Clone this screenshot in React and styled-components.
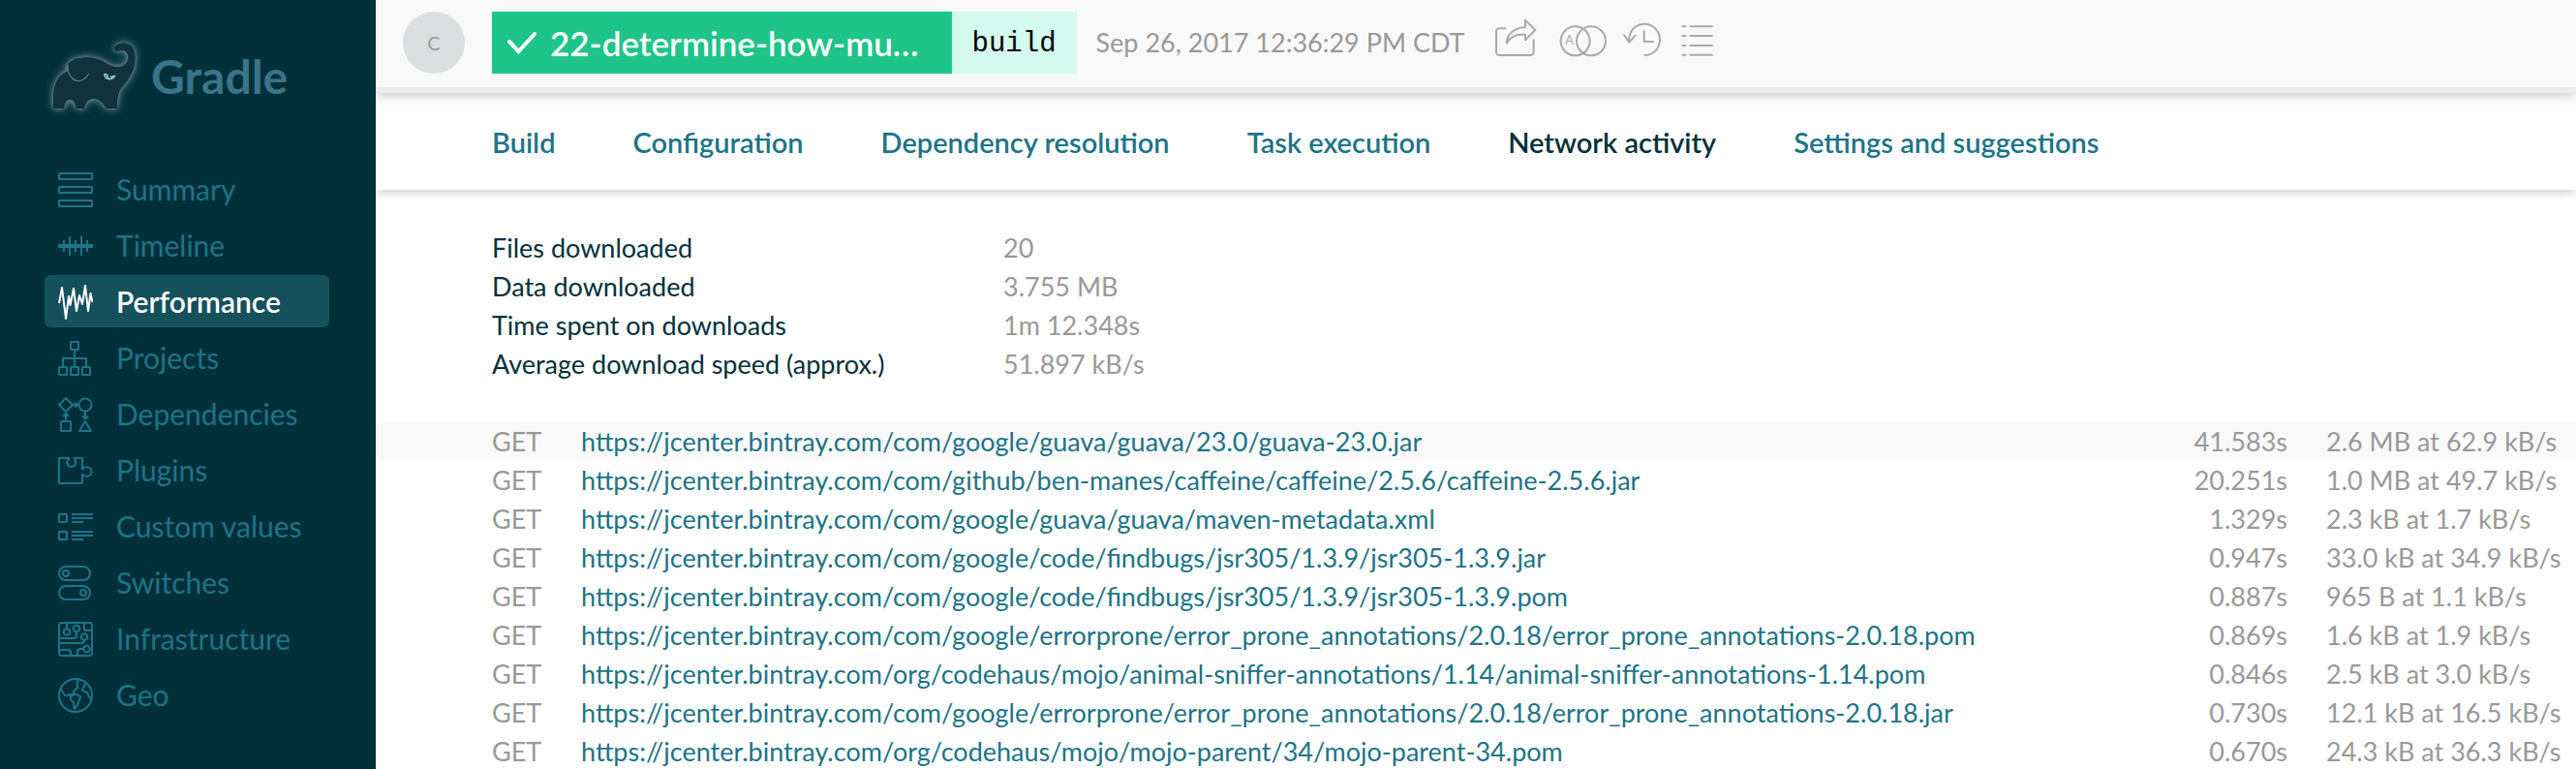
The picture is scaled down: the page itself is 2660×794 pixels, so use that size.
import React from "react";
import styled, { createGlobalStyle, css } from "styled-components";

const GlobalStyle = createGlobalStyle`
  *, *::before, *::after { box-sizing: border-box; }
  body {
    margin: 0;
    background: #fff;
    color: #02303a;
    font-family: Lato, "Liberation Sans", sans-serif;
    font-size: 27px;
    line-height: 40px;
  }
`;

const Shell = styled.div`
  display: flex;
  height: 100vh;
  overflow: hidden;
`;

const Sidebar = styled.aside`
  flex: 0 0 388px;
  padding: 30px 48px 0 46px;
  background: #02303a;
`;

const Brand = styled.a`
  display: flex;
  align-items: center;
  height: 100px;
  color: #3a7488;
  font-size: 48px;
  font-weight: 700;
  line-height: 58px;
  text-decoration: none;
`;

const BrandName = styled.span`
  padding: 0 0 2px 2px;
`;

const BrandMark = styled.svg`
  width: 108px;
  height: 100px;
  overflow: visible;
  filter: drop-shadow(0 0 2px rgba(150, 180, 184, 0.6)) drop-shadow(0 0 4px rgba(150, 180, 184, 0.6));
`;

const NavList = styled.ul`
  display: flex;
  flex-direction: column;
  gap: 4px;
  margin: 38px 0 0;
  padding: 0;
  list-style: none;
`;

const NavLink = styled.a`
  display: flex;
  align-items: center;
  gap: 24px;
  height: 54px;
  padding: 2px 14px 0;
  border-radius: 6px;
  color: #1d7487;
  font-size: 30px;
  line-height: 36px;
  text-decoration: none;
  ${(p) =>
    p.$active &&
    css`
      background: #15505d;
      color: #fff;
      font-weight: 600;
    `}
`;

const NavLabel = styled.span`
  padding-bottom: 2px;
`;

const NavIcon = styled.svg`
  flex: none;
  width: 36px;
  height: 36px;
  fill: none;
  stroke: currentColor;
  stroke-width: 2;
  stroke-linejoin: round;
`;

const Main = styled.main`
  flex: 1;
  min-width: 0;
  overflow: hidden;
`;

const Header = styled.header`
  position: relative;
  z-index: 2;
  display: flex;
  align-items: center;
  height: 96px;
  padding: 0 28px 2px;
  background: #f9f9f9;
  border-bottom: 6px solid #ececec;
  box-shadow: 0 2px 12px rgba(0, 0, 0, 0.24);
`;

const Avatar = styled.div`
  display: flex;
  align-items: center;
  justify-content: center;
  width: 64px;
  height: 64px;
  margin-right: 28px;
  border-radius: 50%;
  background: #dadedf;
  color: #999;
  font-size: 20px;
`;

const BuildName = styled.h1`
  display: flex;
  align-items: center;
  gap: 14px;
  height: 64px;
  margin: 0;
  padding: 0 34px 0 16px;
  background: #1fc48a;
  color: #fff;
  font-size: 35px;
  font-weight: 600;
  white-space: nowrap;
`;

const CheckMark = styled.svg`
  width: 30px;
  height: 24px;
  fill: none;
  stroke: currentColor;
  stroke-width: 4;
  stroke-linecap: round;
`;

const TaskName = styled.code`
  height: 64px;
  padding: 4px 21px 0;
  background: #d4f9ee;
  color: #000;
  font-family: "Liberation Mono", monospace;
  font-size: 29px;
  line-height: 60px;
`;

const Timestamp = styled.time`
  margin: 0 30px 0 20px;
  color: #999;
  white-space: nowrap;
`;

const Actions = styled.div`
  display: flex;
  gap: 12px;
`;

const ActionButton = styled.button`
  display: block;
  padding: 0;
  border: 0;
  background: none;
  color: #aaa;
  cursor: pointer;
`;

const ActionIcon = styled.svg`
  display: block;
  height: 52px;
  fill: none;
  stroke: currentColor;
  stroke-width: 6;
  stroke-linecap: round;
  stroke-linejoin: round;

  text {
    fill: currentColor;
    stroke: none;
    font-family: Lato, sans-serif;
    font-size: 38px;
  }
`;

const Tabs = styled.nav`
  position: relative;
  z-index: 1;
  display: flex;
  align-items: center;
  gap: 80px;
  height: 100px;
  padding: 2px 120px 0;
  background: #fff;
  box-shadow: 0 2px 10px rgba(0, 0, 0, 0.22);
`;

const Tab = styled.a`
  color: ${(p) => (p.$active ? "#02303a" : "#1d7487")};
  font-size: 29px;
  font-weight: 600;
  text-decoration: none;
  white-space: nowrap;
`;

const Stats = styled.dl`
  display: grid;
  grid-template-columns: 528px 1fr;
  margin: 0;
  padding: 40px 120px;

  dd {
    margin: 0;
    color: #999;
  }
`;

const Requests = styled.table`
  width: 100%;
  border-collapse: collapse;
  table-layout: fixed;
`;

const RequestRow = styled.tr`
  background: ${(p) => (p.$highlighted ? "#f9f9f9" : "transparent")};
`;

const Cell = styled.td`
  width: ${(p) => p.$width || "auto"};
  padding: 0 0 0 ${(p) => p.$indent || "0"};
  color: #999;
  text-align: ${(p) => p.$align || "left"};
  white-space: nowrap;
`;

const RequestLink = styled.a`
  color: #1d7487;
  text-decoration: none;
`;

const navItems = [
  {
    label: "Summary",
    icon: (
      <>
        <rect x="1" y="1" width="34" height="6" rx="0.5" />
        <rect x="1" y="15" width="34" height="6" rx="0.5" />
        <rect x="1" y="29" width="34" height="6" rx="0.5" />
      </>
    ),
  },
  {
    label: "Timeline",
    icon: (
      <>
        <path d="M0 18H36" strokeWidth="4" />
        <path d="M6 12V24M12 8V28M18 12V24M24 8V28M30 12V24" />
      </>
    ),
  },
  {
    label: "Performance",
    active: true,
    icon: <path d="M1 19L4 3L8 35L11 12L12.500 21L16 4L19 27L22 11L25 20L28 1L31 27L33.500 9L35.500 18" />,
  },
  {
    label: "Projects",
    icon: (
      <>
        <rect x="13" y="1" width="8" height="8" rx="0.5" />
        <path d="M17 9V27M5 27V18H29V27" />
        <rect x="1" y="27" width="8" height="8" rx="0.5" />
        <rect x="13" y="27" width="8" height="8" rx="0.5" />
        <rect x="25" y="27" width="8" height="8" rx="0.5" />
      </>
    ),
  },
  {
    label: "Dependencies",
    icon: (
      <>
        <path d="M8 1L15 8L8 15L1 8Z" />
        <circle cx="28" cy="8" r="6.500" />
        <rect x="3" y="25" width="10" height="10" rx="0.5" />
        <path d="M28 25L34 35H22Z" />
        <path d="M15 8H20M17.500 5.500L20 8L17.500 10.500M8 25V16.500M5 20L8 17L11 20M28 15V22.500M25 19.500L28 22.500L31 19.500" />
      </>
    ),
  },
  {
    label: "Plugins",
    icon: <path d="M1 5H11V6.500C7.500 9 9.500 14 13.800 14S19.500 9 17 6.500V5H25V16.500C28 12.500 34.500 14 34.500 19S28 25.500 25 21.500V31H1Z" />,
  },
  {
    label: "Custom values",
    icon: (
      <>
        <rect x="1" y="5" width="8" height="8" rx="0.5" />
        <rect x="1" y="23" width="8" height="8" rx="0.5" />
        <path d="M14 5H36M14 9H36M14 13H26M14 23H36M14 27H36M14 31H26" />
      </>
    ),
  },
  {
    label: "Switches",
    icon: (
      <>
        <rect x="1" y="1" width="32" height="14" rx="7" />
        <circle cx="8" cy="8" r="3" />
        <rect x="1" y="21" width="32" height="14" rx="7" />
        <circle cx="26" cy="28" r="3" />
      </>
    ),
  },
  {
    label: "Infrastructure",
    icon: (
      <>
        <rect x="1" y="1" width="34" height="34" rx="3" />
        <circle cx="9" cy="10.500" r="3.300" />
        <circle cx="19" cy="7" r="3.300" />
        <circle cx="27" cy="15.500" r="3.300" />
        <circle cx="29.500" cy="28" r="3.300" />
        <path d="M9 1V7M19 10.500V14Q19 17 16 17H1M27 19Q27 22 24 22H1M27 1V7Q27 9 29 9H35M1 29H10Q13 29 13 32V35M26 28H23Q20 28 20 31V35" />
      </>
    ),
  },
  {
    label: "Geo",
    icon: (
      <>
        <circle cx="18" cy="18" r="17" />
        <path d="M3 11C4 14 5 15 7 18C9 19 10 16.500 16 17V14C17 11 18 13 20 10C19 7 21 5 20 1" />
        <path d="M13 19L18 16.500C20 18 21 19 23 19C23 23 20 25 20 28L17 32C16 30 16.500 27 16 25C13 23 12 22 13 19Z" />
        <path d="M28.500 4.500C28 8 26 9 25 12C27 15 28 14 30 15C31 18 32 20 34 21" />
      </>
    ),
  },
];

const actions = [
  {
    label: "Share",
    x: 33,
    width: 48,
    drawing: (
      <path d="M68 58H50Q39 58 39 69V130Q39 141 50 141H144Q155 141 155 130V94M71 103C72 75 95 57 129 54V32L160 63L129 94V77C105 75 85 82 71 103Z" />
    ),
  },
  {
    label: "Compare",
    x: 213,
    width: 60,
    drawing: (
      <>
        <circle cx="284" cy="97" r="45" />
        <circle cx="333" cy="97" r="45" />
        <text x="253" y="109">A</text>
      </>
    ),
  },
  {
    label: "History",
    x: 429,
    width: 42,
    drawing: <path d="M451 98C448 68 470 44 498 44C526 44 546 67 546 93C546 120 526 141 499 141M435 78L451 101L470 80M497 67V99H525" />,
  },
  {
    label: "Build scans list",
    x: 591,
    width: 42,
    drawing: (
      <path d="M616 52H626M640 52H708M616 81H626M640 81H708M616 111H626M640 111H708M616 140H626M640 140H708" />
    ),
  },
];

const tabs = ["Build", "Configuration", "Dependency resolution", "Task execution", "Network activity", "Settings and suggestions"];

const stats = [
  ["Files downloaded", "20"],
  ["Data downloaded", "3.755 MB"],
  ["Time spent on downloads", "1m 12.348s"],
  ["Average download speed (approx.)", "51.897 kB/s"],
];

const repository = "https://jcenter.bintray.com/";

const requests = [
  ["com/google/guava/guava/23.0/guava-23.0.jar", "41.583s", "2.6 MB at 62.9 kB/s"],
  ["com/github/ben-manes/caffeine/caffeine/2.5.6/caffeine-2.5.6.jar", "20.251s", "1.0 MB at 49.7 kB/s"],
  ["com/google/guava/guava/maven-metadata.xml", "1.329s", "2.3 kB at 1.7 kB/s"],
  ["com/google/code/findbugs/jsr305/1.3.9/jsr305-1.3.9.jar", "0.947s", "33.0 kB at 34.9 kB/s"],
  ["com/google/code/findbugs/jsr305/1.3.9/jsr305-1.3.9.pom", "0.887s", "965 B at 1.1 kB/s"],
  ["com/google/errorprone/error_prone_annotations/2.0.18/error_prone_annotations-2.0.18.pom", "0.869s", "1.6 kB at 1.9 kB/s"],
  ["org/codehaus/mojo/animal-sniffer-annotations/1.14/animal-sniffer-annotations-1.14.pom", "0.846s", "2.5 kB at 3.0 kB/s"],
  ["com/google/errorprone/error_prone_annotations/2.0.18/error_prone_annotations-2.0.18.jar", "0.730s", "12.1 kB at 16.5 kB/s"],
  ["org/codehaus/mojo/mojo-parent/34/mojo-parent-34.pom", "0.670s", "24.3 kB at 36.3 kB/s"],
];

function Elephant() {
  return (
    <BrandMark viewBox="18 0 324 300" aria-hidden="true">
      <path
        fill="#11323b"
        d="M45 246V207C46 170 61 141 90 130L90 111C95 99 110 91 128 89C160 85 186 90 208 104C226 115 240 120 253 116C271 111 280 94 276 80C272 66 258 64 248 68C238 71 229 61 236 53C246 43 262 40 275 45C292 51 300 70 299 93C298 124 284 150 265 172C249 190 241 208 244 246H210C198 228 186 215 168 216C154 216 144 230 141 246H116C113 228 106 219 97 219C87 220 80 230 78 246Z"
      />
      <path fill="none" stroke="#587a80" strokeWidth="4" d="M90 111V130C97 147 106 162 123 161C139 160 148 151 155 138" />
      <path
        fill="none"
        stroke="#8cc0c9"
        strokeWidth="5"
        d="M203 138C204 150 210 155 219 155C227 155 232 152 235 146L222 148M204 139L213 143C211 148 214 152 219 153"
      />
    </BrandMark>
  );
}

export default function App() {
  return (
    <>
      <GlobalStyle />
      <Shell>
        <Sidebar>
          <Brand href="#">
            <Elephant />
            <BrandName>Gradle</BrandName>
          </Brand>
          <nav aria-label="Build scan sections">
            <NavList>
              {navItems.map((item) => (
                <li key={item.label}>
                  <NavLink href="#" $active={item.active}>
                    <NavIcon viewBox="0 0 36 36" aria-hidden="true">
                      {item.icon}
                    </NavIcon>
                    <NavLabel>{item.label}</NavLabel>
                  </NavLink>
                </li>
              ))}
            </NavList>
          </nav>
        </Sidebar>
        <Main>
          <Header>
            <Avatar>C</Avatar>
            <BuildName>
              <CheckMark viewBox="0 0 30 24" aria-hidden="true">
                <path d="M2 11L11.500 21L28 3" />
              </CheckMark>
              22-determine-how-mu…
            </BuildName>
            <TaskName>build</TaskName>
            <Timestamp>Sep 26, 2017 12:36:29 PM CDT</Timestamp>
            <Actions>
              {actions.map((action) => (
                <ActionButton key={action.label} type="button" aria-label={action.label}>
                  <ActionIcon width={action.width} viewBox={`${action.x} 24 ${action.width * 3} 156`}>
                    {action.drawing}
                  </ActionIcon>
                </ActionButton>
              ))}
            </Actions>
          </Header>
          <Tabs aria-label="Performance">
            {tabs.map((tab) => (
              <Tab key={tab} href="#" $active={tab === "Network activity"}>
                {tab}
              </Tab>
            ))}
          </Tabs>
          <Stats>
            {stats.map(([name, value]) => (
              <React.Fragment key={name}>
                <dt>{name}</dt>
                <dd>{value}</dd>
              </React.Fragment>
            ))}
          </Stats>
          <Requests>
            <tbody>
              {requests.map(([path, duration, rate], index) => (
                <RequestRow key={path} $highlighted={index === 0}>
                  <Cell $width="212px" $indent="120px">GET</Cell>
                  <Cell>
                    <RequestLink href={repository + path}>{repository + path}</RequestLink>
                  </Cell>
                  <Cell $width="140px" $align="right">{duration}</Cell>
                  <Cell $width="298px" $indent="40px">{rate}</Cell>
                </RequestRow>
              ))}
            </tbody>
          </Requests>
        </Main>
      </Shell>
    </>
  );
}
